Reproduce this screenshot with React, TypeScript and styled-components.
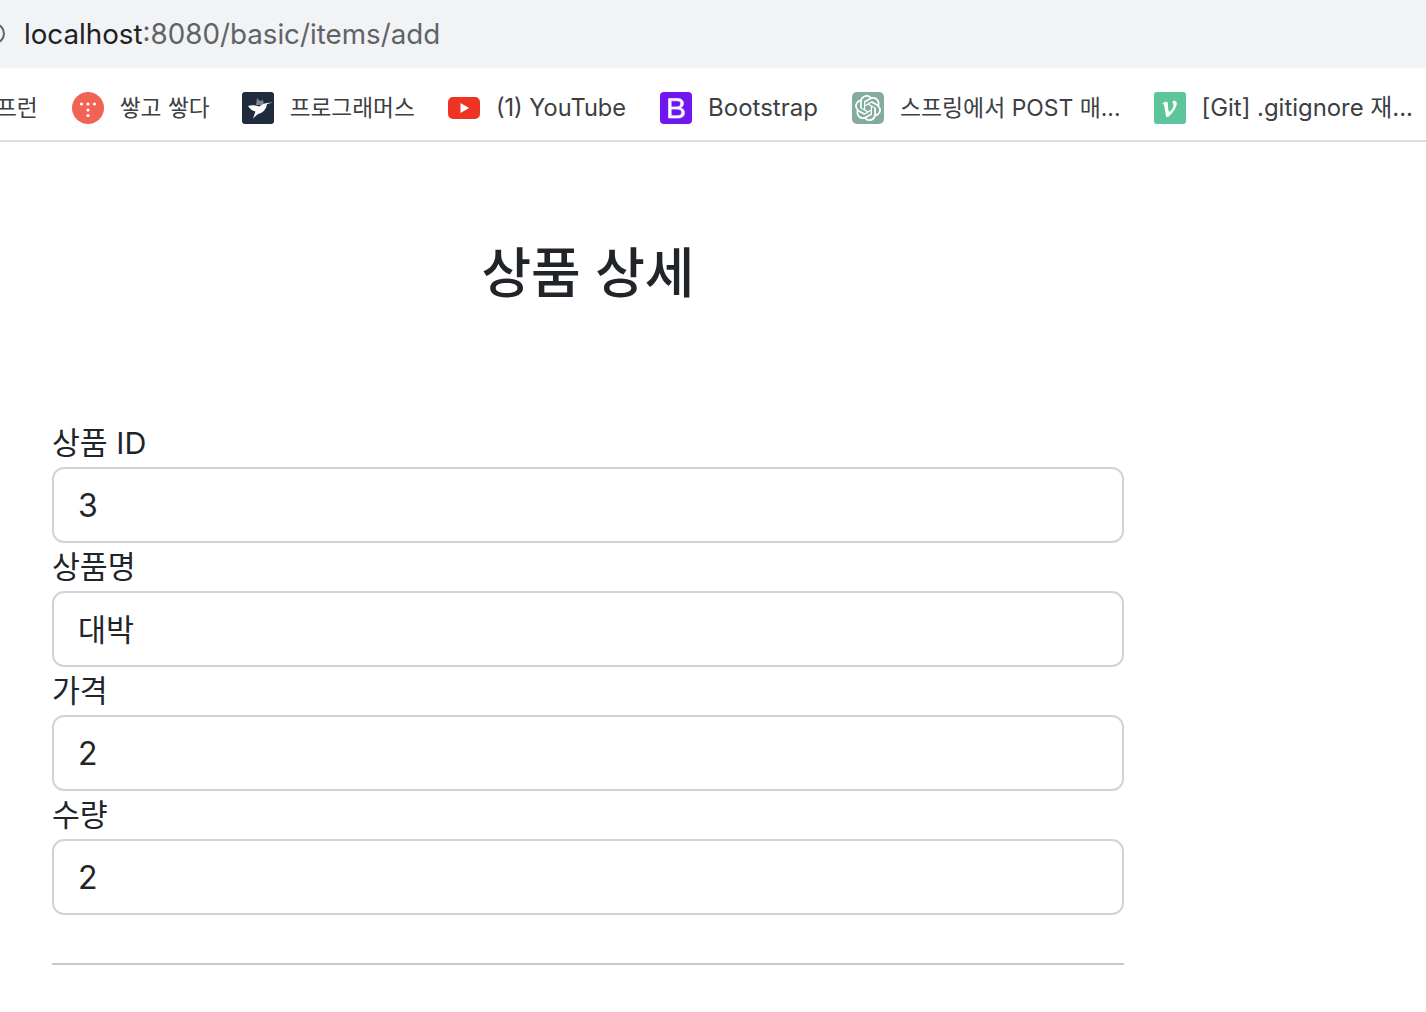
import React from "react";
import styled, { createGlobalStyle } from "styled-components";
import { SiOpenai } from "react-icons/si";

const FONT = `Inter, "Noto Sans CJK KR", "Noto Sans", sans-serif`;

const GlobalStyle = createGlobalStyle`
  html, body {
    margin: 0;
    padding: 0;
    background: #fff;
  }
  body {
    font-family: ${FONT};
    overflow: hidden;
  }
`;

const Page = styled.div`
  width: 1426px;
  height: 1012px;
  overflow: hidden;
`;

const AddressBar = styled.div`
  height: 68px;
  background: #f1f3f4;
  display: flex;
  align-items: center;
  position: relative;
  padding-left: 24px;
  font-size: 27.75px;
  white-space: nowrap;
`;

const InfoRing = styled.span`
  position: absolute;
  left: -16px;
  top: 23px;
  width: 17px;
  height: 17px;
  border: 2.500px solid #5f6368;
  border-radius: 50%;
`;

const Host = styled.span`
  color: #202124;
`;

const UrlRest = styled.span`
  color: #5f6368;
`;

const BookmarkBar = styled.div`
  height: 74px;
  box-sizing: border-box;
  padding-top: 8px;
  border-bottom: 2px solid #dadce0;
  display: flex;
  align-items: center;
  overflow: hidden;
  white-space: nowrap;
`;

const Bookmark = styled.div<{ $clip?: number; $gap?: number; $size?: number }>`
  display: flex;
  align-items: center;
  flex: none;
  gap: 16px;
  margin-left: ${({ $clip }) => ($clip ? `-${$clip}px` : "0")};
  margin-right: ${({ $gap }) => $gap ?? 34}px;
  font-size: ${({ $size }) => $size ?? 22.7}px;
  color: #3c4043;
`;

const BookmarkText = styled.span`
  display: block;
  height: 30px;
  line-height: 30px;
`;

const Favicon = styled.svg`
  width: 32px;
  height: 32px;
  flex: none;
  display: block;
`;

const IconTile = styled.span`
  width: 32px;
  height: 32px;
  flex: none;
  border-radius: 5px;
  background: #83ac9c;
  color: #fff;
  display: flex;
  align-items: center;
  justify-content: center;
  font-size: 26px;
`;

const Content = styled.main`
  width: 1072px;
  margin-left: 52px;
`;

const Title = styled.h2`
  margin: 0;
  height: 277px;
  padding-top: 94px;
  box-sizing: border-box;
  text-align: center;
  font-size: 54px;
  line-height: 76px;
  font-weight: 500;
  color: #212529;
`;

const Field = styled.div`
  display: flex;
  flex-direction: column;
`;

const Label = styled.label`
  height: 48px;
  line-height: 49px;
  font-size: 30.300px;
  color: #212529;
`;

const Input = styled.input<{ $hangul?: boolean }>`
  height: 76px;
  box-sizing: border-box;
  width: 100%;
  padding: 0 24px ${({ $hangul }) => ($hangul ? 3 : 0)}px;
  border: 2px solid #ced4da;
  border-radius: 12px;
  background: #fff;
  font-family: ${FONT};
  font-size: ${({ $hangul }) => ($hangul ? 30.5 : 32)}px;
  color: #212529;
  outline: none;
`;

const Divider = styled.hr`
  margin: 48px 0 0;
  border: 0;
  border-top: 2px solid #c8c8c8;
`;

const fields = [
  { label: "상품 ID", value: "3" },
  { label: "상품명", value: "대박", hangul: true },
  { label: "가격", value: "2" },
  { label: "수량", value: "2" },
];

export default function App() {
  return (
    <Page>
      <GlobalStyle />
      <AddressBar>
        <InfoRing />
        <Host>localhost</Host>
        <UrlRest>:8080/basic/items/add</UrlRest>
      </AddressBar>
      <BookmarkBar>
        <Bookmark $clip={4}>
          <BookmarkText>프런</BookmarkText>
        </Bookmark>
        <Bookmark $gap={32}>
          <Favicon viewBox="0 0 32 32">
            <circle cx="16" cy="16" r="16" fill="#f16455" />
            <g fill="#fff">
              <circle cx="9.500" cy="12" r="1.600" />
              <circle cx="16" cy="12" r="1.600" />
              <circle cx="22.500" cy="12" r="1.600" />
              <circle cx="16" cy="18" r="1.600" />
              <circle cx="16" cy="23.500" r="1.600" />
            </g>
          </Favicon>
          <BookmarkText>쌓고 쌓다</BookmarkText>
        </Bookmark>
        <Bookmark $gap={33}>
          <Favicon viewBox="0 0 32 32">
            <rect width="32" height="32" rx="3" fill="#202b3d" />
            <path d="M14 13l1-7 3 3 3-1 1 5z" fill="#7e8796" />
            <path d="M6 14c4-1.500 8-.5 11 .5 2-1.500 5-3 8-3.500l6-.5-6 1.500c-.5 5-4 9-9 10l-5 4.500 2.500-7c-3.500-.5-6-3-7.500-5.500z" fill="#fff" />
          </Favicon>
          <BookmarkText>프로그래머스</BookmarkText>
        </Bookmark>
        <Bookmark $size={23.6}>
          <Favicon viewBox="0 0 32 32">
            <rect y="5" width="32" height="22" rx="5" fill="#ee3524" />
            <path d="M12.500 11l8.500 5-8.500 5z" fill="#fff" />
          </Favicon>
          <BookmarkText>(1) YouTube</BookmarkText>
        </Bookmark>
        <Bookmark $size={24}>
          <Favicon viewBox="0 0 32 32">
            <rect width="32" height="32" rx="4" fill="#6f17ee" />
            <path
              d="M8.500 6.500h9c4 0 6 2 6 5 0 2.200-1.300 3.700-3.300 4.200v.2c2.700.4 4.300 2.200 4.300 4.800 0 3.400-2.500 5.300-6.700 5.300H8.500zM11.200 8.800v6.100h4.900c3.100 0 4.600-1.100 4.600-3.200 0-1.900-1.400-2.900-3.800-2.900zM11.200 17.100v6.600h5.800c3.100 0 4.700-1.100 4.700-3.300 0-2.200-1.700-3.300-5-3.300z"
              fill="#fff"
              fillRule="evenodd"
              stroke="#fff"
              strokeWidth="0.6"
            />
          </Favicon>
          <BookmarkText>Bootstrap</BookmarkText>
        </Bookmark>
        <Bookmark $size={22.9} $gap={33}>
          <IconTile>
            <SiOpenai />
          </IconTile>
          <BookmarkText>스프링에서 POST 매...</BookmarkText>
        </Bookmark>
        <Bookmark $gap={0} $size={23.9}>
          <Favicon viewBox="0 0 32 32">
            <rect width="32" height="32" rx="3" fill="#5cc69a" />
            <path
              d="M8.500 11.500c1.500-1.200 3.500-2 4.500-1.500 1 .5 1 2 1 4 0 3 .5 5.500 1.500 6 2-1.500 4-4.500 4-7 0-1.500-1-2-1-3 0-.8.8-1.200 1.800-1.200 1.500 0 2.500 1 2.500 2.800 0 3.500-4 9.500-8.500 13.400h-2c-.8-3.500-1.500-8.500-2-11-.3-1.500-.8-2-2.300-2z"
              fill="#fff"
            />
          </Favicon>
          <BookmarkText>[Git] .gitignore 재...</BookmarkText>
        </Bookmark>
      </BookmarkBar>
      <Content>
        <Title>상품 상세</Title>
        {fields.map((f) => (
          <Field key={f.label}>
            <Label>{f.label}</Label>
            <Input readOnly value={f.value} $hangul={f.hangul} />
          </Field>
        ))}
        <Divider />
      </Content>
    </Page>
  );
}
